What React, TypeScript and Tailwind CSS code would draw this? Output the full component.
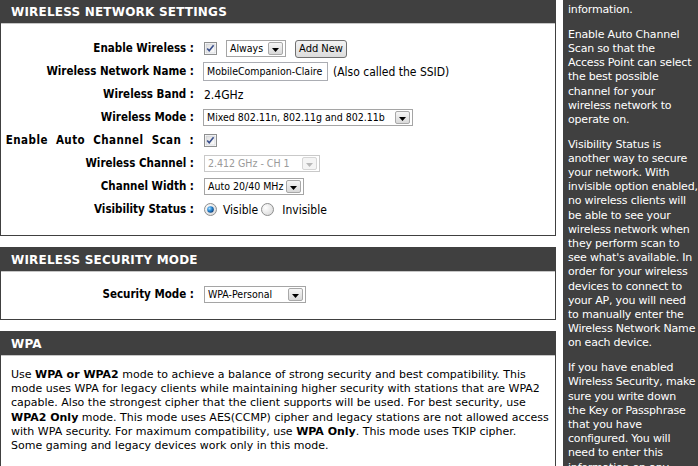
import type { ReactNode } from "react";

const tahoma = "font-['DejaVu_Sans_Condensed','Liberation_Sans',sans-serif]";
const verdana = "font-['DejaVu_Sans','Liberation_Sans',sans-serif]";

function Arrow({ disabled = false }: { disabled?: boolean }) {
    return (
        <span
            className={`shrink-0 flex items-center justify-center w-[15px] h-[13px] mr-[2px] rounded-[2px] border ${
                disabled ? "border-[#d5d5d5] bg-[#f4f4f4]" : "border-[#a8a8a8] bg-gradient-to-b from-[#f6f6f6] to-[#d9d9d9]"
            }`}
        >
            <svg width="7" height="4" viewBox="0 0 7 4" className="mt-[2px]">
                <path d="M0 0h7L3.5 4z" fill={disabled ? "#b8b8b8" : "#000"} />
            </svg>
        </span>
    );
}

function Select({ value, width, disabled = false }: { value: string; width: string; disabled?: boolean }) {
    return (
        <div
            className={`${width} h-[17px] flex items-center justify-between border bg-white ${
                disabled ? "border-[#c9c9c9] text-[#9a9a9a]" : "border-[#a5a5a5] text-black"
            }`}
        >
            <span className={`pl-[3px] text-[10.5px] leading-none whitespace-nowrap ${tahoma}`}>{value}</span>
            <Arrow disabled={disabled} />
        </div>
    );
}

function Checkbox() {
    return (
        <svg width="13" height="13" viewBox="0 0 13 13" className="shrink-0">
            <defs>
                <linearGradient id="cbg" x1="0" y1="0" x2="1" y2="1">
                    <stop offset="0" stopColor="#dcdcdc" />
                    <stop offset="1" stopColor="#ffffff" />
                </linearGradient>
            </defs>
            <rect x="0.5" y="0.5" width="12" height="12" fill="#fff" stroke="#8e8f8f" />
            <rect x="2" y="2" width="9" height="9" fill="url(#cbg)" stroke="#c4c7cc" strokeWidth="0.6" />
            <path d="M3.2 6.4l2 2.3L9.6 3.2" fill="none" stroke="#3a4f8c" strokeWidth="1.6" />
        </svg>
    );
}

function Radio({ checked }: { checked: boolean }) {
    return (
        <svg width="13" height="13" viewBox="0 0 13 13" className="shrink-0">
            <defs>
                <radialGradient id="rbg" cx="0.35" cy="0.35" r="0.8">
                    <stop offset="0" stopColor="#ffffff" />
                    <stop offset="1" stopColor="#d6d6d6" />
                </radialGradient>
                <radialGradient id="rdot" cx="0.35" cy="0.35" r="0.7">
                    <stop offset="0" stopColor="#a9dcff" />
                    <stop offset="0.5" stopColor="#2a8ad4" />
                    <stop offset="1" stopColor="#0e3f7a" />
                </radialGradient>
            </defs>
            <circle cx="6.5" cy="6.5" r="6" fill="url(#rbg)" stroke="#8e8f8f" />
            {checked && <circle cx="6.5" cy="6.5" r="3.3" fill="url(#rdot)" />}
        </svg>
    );
}

function Row({ label, wide = false, children }: { label: string; wide?: boolean; children: ReactNode }) {
    return (
        <div className="h-[23px] flex items-center">
            <span
                className={`w-[193px] shrink-0 text-right font-bold text-[11.5px] whitespace-nowrap ${
                    wide ? "tracking-[0.45px] [word-spacing:4px]" : ""
                } ${tahoma}`}
            >
                {label}
            </span>
            <div className="ml-[10px] flex items-center">{children}</div>
        </div>
    );
}

function Panel({ title, bodyClass, children }: { title: string; bodyClass: string; children: ReactNode }) {
    return (
        <section className="border border-[#404040]">
            <div className="h-[24px] bg-[#404040] border-b border-[#c6c6c6] px-[10px] flex items-center">
                <h2 className={`text-[12px] font-bold text-white tracking-[0.2px] ${verdana}`}>{title}</h2>
            </div>
            <div className={`bg-white ${bodyClass}`}>{children}</div>
        </section>
    );
}

const helpText = [
    ["information."],
    [
        "Enable Auto Channel",
        "Scan so that the",
        "Access Point can select",
        "the best possible",
        "channel for your",
        "wireless network to",
        "operate on.",
    ],
    [
        "Visibility Status is",
        "another way to secure",
        "your network. With",
        "invisible option enabled,",
        "no wireless clients will",
        "be able to see your",
        "wireless network when",
        "they perform scan to",
        "see what's available. In",
        "order for your wireless",
        "devices to connect to",
        "your AP, you will need",
        "to manually enter the",
        "Wireless Network Name",
        "on each device.",
    ],
    [
        "If you have enabled",
        "Wireless Security, make",
        "sure you write down",
        "the Key or Passphrase",
        "that you have",
        "configured. You will",
        "need to enter this",
        "information on any",
    ],
];

export default function App() {
    return (
        <div className="w-[698px] h-[466px] overflow-hidden bg-white flex text-black">
            <main className="w-[556px] shrink-0 -mt-px flex flex-col gap-[11px]">
                <Panel title="WIRELESS NETWORK SETTINGS" bodyClass="pt-[13px] pb-[14px]">
                    <Row label="Enable Wireless :">
                        <Checkbox />
                        <div className="ml-[9px]">
                            <Select value="Always" width="w-[60px]" />
                        </div>
                        <button
                            className={`ml-[9px] h-[18px] w-[52px] rounded-[3px] border border-[#707070] bg-gradient-to-b from-[#f3f3f3] to-[#dcdcdc] text-[11px] leading-none ${tahoma}`}
                        >
                            Add New
                        </button>
                    </Row>
                    <Row label="Wireless Network Name :">
                        <div className={`-ml-px w-[125px] h-[19px] border border-[#abadb3] flex items-center pl-[3px] text-[10.5px] whitespace-nowrap ${tahoma}`}>
                            MobileCompanion-Claire
                        </div>
                        <span className={`ml-[5px] text-[12px] whitespace-nowrap ${tahoma}`}>(Also called the SSID)</span>
                    </Row>
                    <Row label="Wireless Band :">
                        <span className={`text-[12px] ${tahoma}`}>2.4GHz</span>
                    </Row>
                    <Row label="Wireless Mode :">
                        <div className="-ml-px">
                            <Select value="Mixed 802.11n, 802.11g and 802.11b" width="w-[210px]" />
                        </div>
                    </Row>
                    <Row label="Enable Auto Channel Scan :" wide>
                        <Checkbox />
                    </Row>
                    <Row label="Wireless Channel :">
                        <Select value="2.412 GHz - CH 1" width="w-[116px]" disabled />
                    </Row>
                    <Row label="Channel Width :">
                        <Select value="Auto 20/40 MHz" width="w-[100px]" />
                    </Row>
                    <Row label="Visibility Status :">
                        <Radio checked />
                        <span className={`ml-[6px] text-[12px] ${tahoma}`}>Visible</span>
                        <span className="ml-[3px]">
                            <Radio checked={false} />
                        </span>
                        <span className={`ml-[8px] text-[12px] ${tahoma}`}>Invisible</span>
                    </Row>
                </Panel>

                <Panel title="WIRELESS SECURITY MODE" bodyClass="pt-[11px] pb-[13px]">
                    <Row label="Security Mode :">
                        <Select value="WPA-Personal" width="w-[102px]" />
                    </Row>
                </Panel>

                <Panel title="WPA" bodyClass="pt-[12px] pb-[20px] px-[10px]">
                    <div className={`text-[11px] leading-[14.2px] whitespace-nowrap ${verdana}`}>
                        <div>
                            Use <b>WPA or WPA2</b> mode to achieve a balance of strong security and best compatibility. This
                        </div>
                        <div>mode uses WPA for legacy clients while maintaining higher security with stations that are WPA2</div>
                        <div>capable. Also the strongest cipher that the client supports will be used. For best security, use</div>
                        <div>
                            <b>WPA2 Only</b> mode. This mode uses AES(CCMP) cipher and legacy stations are not allowed access
                        </div>
                        <div>
                            with WPA security. For maximum compatibility, use <b>WPA Only</b>. This mode uses TKIP cipher.
                        </div>
                        <div>Some gaming and legacy devices work only in this mode.</div>
                    </div>
                </Panel>
            </main>

            <aside
                className={`ml-[7px] flex-1 min-w-0 bg-[#404040] text-white pl-[5px] pt-[3px] text-[11px] leading-[14.2px] tracking-[-0.2px] overflow-hidden ${verdana}`}
            >
                {helpText.map((para, i) => (
                    <div key={i} className="mb-[10.5px]">
                        {para.map((line) => (
                            <div key={line} className="whitespace-nowrap">
                                {line}
                            </div>
                        ))}
                    </div>
                ))}
            </aside>
        </div>
    );
}
